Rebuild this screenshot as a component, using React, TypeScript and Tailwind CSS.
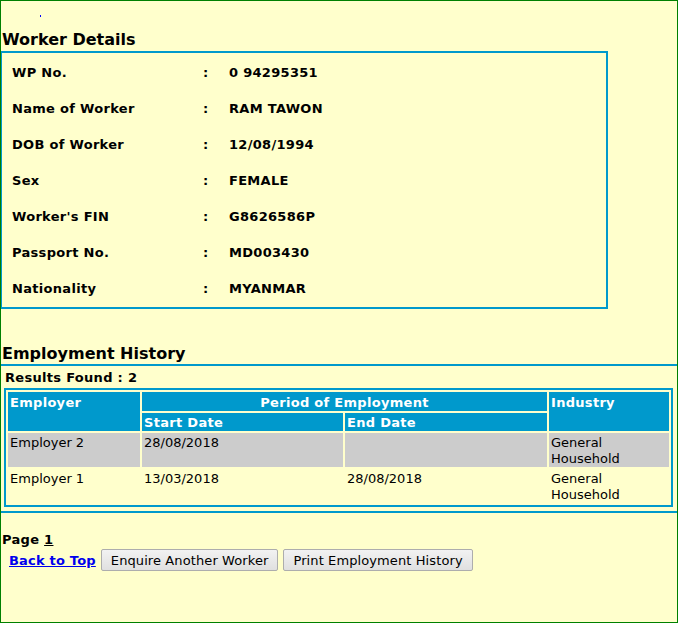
import React from 'react';

const DETAILS: [string, string][] = [
  ['WP No.', '0 94295351'],
  ['Name of Worker', 'RAM TAWON'],
  ['DOB of Worker', '12/08/1994'],
  ['Sex', 'FEMALE'],
  ["Worker's FIN", 'G8626586P'],
  ['Passport No.', 'MD003430'],
  ['Nationality', 'MYANMAR'],
];

const HISTORY = [
  { employer: 'Employer 2', start: '28/08/2018', end: '', shaded: true },
  { employer: 'Employer 1', start: '13/03/2018', end: '28/08/2018', shaded: false },
];

// header cell look, shared by all blue cells
const TH = 'bg-[#0099CC] text-white font-bold tracking-[0.3px]';

export default function App() {
  return (
    <div className="h-[623px] border border-[#008000] bg-[#FFFFCC] text-[13px] leading-4 text-black font-['Verdana','DejaVu_Sans',sans-serif] overflow-hidden">
      {/* top anchor */}
      <div className="h-[28px] pl-[39px] pt-[14px]">
        <span className="block w-px h-[2px] bg-[#0000FF]" />
      </div>

      {/* ── Worker Details ── */}
      <h2 className="h-[22px] pl-px text-[16px] leading-[22px] font-bold">Worker Details</h2>
      <div className="w-[608px] -ml-px border-2 border-[#0099CC] pb-[2px]">
        {DETAILS.map(([label, value]) => (
          <div key={label} className="h-[36px] pt-[4px] flex items-center font-bold tracking-[0.3px]">
            <span className="w-[201px] pl-[10px]">{label}</span>
            <span className="w-[26px]">:</span>
            <span>{value}</span>
          </div>
        ))}
      </div>

      {/* ── Employment History ── */}
      <h2 className="mt-[33px] h-[22px] pl-px pt-px text-[16px] leading-[22px] font-bold">Employment History</h2>
      <div className="border-t-2 border-b-2 border-[#0099CC] pb-[4px]">
        <p className="h-[22px] pl-[4px] pt-px leading-[22px] font-bold tracking-[0.3px]">Results Found : 2</p>
        <div className="ml-[3px] w-[669px] border-2 border-[#0099CC] p-[2px] grid grid-cols-[132px_201px_202px_120px] gap-[2px]">
          <div className={`row-span-2 px-[2px] pt-[3px] ${TH}`}>Employer</div>
          <div className={`col-span-2 h-[19px] text-center pt-[3px] ${TH}`}>Period of Employment</div>
          <div className={`row-span-2 px-[2px] pt-[3px] ${TH}`}>Industry</div>
          <div className={`h-[18px] px-[2px] pt-[2px] ${TH}`}>Start Date</div>
          <div className={`h-[18px] px-[2px] pt-[2px] ${TH}`}>End Date</div>
          {HISTORY.map(h => (
            <React.Fragment key={h.employer}>
              <div className={`h-[34px] px-[2px] pt-[2px] ${h.shaded ? 'bg-[#CCCCCC]' : ''}`}>{h.employer}</div>
              <div className={`h-[34px] px-[2px] pt-[2px] ${h.shaded ? 'bg-[#CCCCCC]' : ''}`}>{h.start}</div>
              <div className={`h-[34px] px-[2px] pt-[2px] ${h.shaded ? 'bg-[#CCCCCC]' : ''}`}>{h.end}</div>
              <div className={`h-[34px] px-[2px] pt-[2px] ${h.shaded ? 'bg-[#CCCCCC]' : ''}`}>
                General
                <br />
                Household
              </div>
            </React.Fragment>
          ))}
        </div>
      </div>

      {/* ── Footer ── */}
      <p className="mt-[19px] pl-px font-bold tracking-[0.3px]">
        Page <span className="underline">1</span>
      </p>
      <div className="mt-[1px] flex items-center gap-[5px] pl-[8px]">
        <a href="#" className="pt-px font-bold tracking-[0.2px] text-[#0000EE] underline">Back to Top</a>
        <button className="h-[22px] px-[9px] pt-px border border-[#ADADAD] rounded-[2px] bg-linear-to-b from-[#F2F2F2] to-[#E0E0E0] text-[13px] tracking-[0.1px] text-black">
          Enquire Another Worker
        </button>
        <button className="h-[22px] px-[9px] pt-px border border-[#ADADAD] rounded-[2px] bg-linear-to-b from-[#F2F2F2] to-[#E0E0E0] text-[13px] tracking-[0.1px] text-black">
          Print Employment History
        </button>
      </div>
    </div>
  );
}
